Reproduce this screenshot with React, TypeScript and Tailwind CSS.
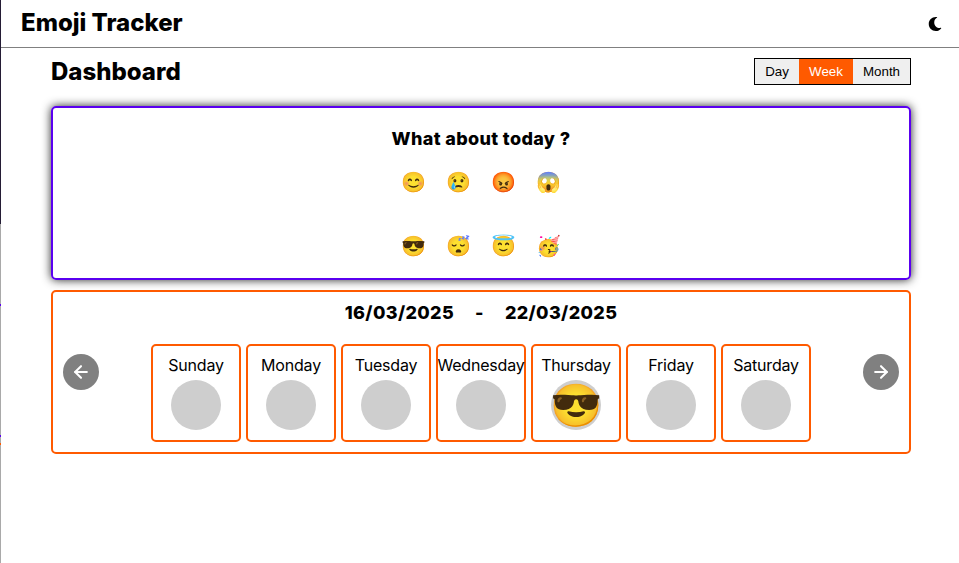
import { ArrowLeft, ArrowRight } from "lucide-react";

const days = ["Sunday", "Monday", "Tuesday", "Wednesday", "Thursday", "Friday", "Saturday"];
const emojis = ["😊", "😢", "😡", "😱", "😎", "😴", "😇", "🥳"];

function Moon() {
  return (
    <svg viewBox="0 0 512 512" className="w-[14px] h-[16px]" fill="#000">
      <path d="M283 512c79 0 151-36 199-95 7-9-1-22-12-20-126 24-242-73-242-200 0-73 39-140 103-176 10-6 8-20-3-22A257 257 0 0 0 283 0C141 0 27 115 27 256s114 256 256 256z" />
    </svg>
  );
}

export default function App() {
  return (
    <div className="flex w-[959px] h-[563px] overflow-hidden bg-white text-black font-['Inter',sans-serif]">
      <div className="w-px shrink-0 flex flex-col">
        <div className="h-[224px] bg-[#241c35]" />
        <div className="h-[80px] bg-[#a9a9a9]" />
        <div className="h-[2px] bg-[#5a00f0]" />
        <div className="h-[129px] bg-[#a9a9a9]" />
        <div className="h-[2px] bg-[#5a00f0]" />
        <div className="h-[6px] bg-[#a9a9a9]" />
        <div className="h-[2px] bg-[#ff5a00]" />
        <div className="flex-1 bg-[#a9a9a9]" />
      </div>
      <div className="flex-1 min-w-0 flex flex-col">
        <header className="h-[48px] shrink-0 border-b border-[#808080] flex items-center justify-between pl-[20px] pr-[17px]">
          <h1 className="text-[24px] leading-[32px] font-extrabold mt-[-2px]">Emoji Tracker</h1>
          <Moon />
        </header>
        <main className="pl-[50px] pr-[48px] flex flex-col">
          <div className="flex items-center justify-between h-[48px] mb-[10px]">
            <h2 className="text-[24px] leading-[32px] font-extrabold">Dashboard</h2>
            <div className="flex h-[27px] w-[157px] border border-black font-['Liberation_Sans',sans-serif] text-[13.33px] mt-[-1px]">
              <div className="w-[44px] bg-[#efefef] flex items-center justify-center">Day</div>
              <div className="w-[54px] bg-[#ff5a00] text-white flex items-center justify-center">Week</div>
              <div className="flex-1 bg-[#efefef] flex items-center justify-center">Month</div>
            </div>
          </div>
          <section className="h-[174px] border-2 border-[#5a00f0] rounded-[5px] shadow-[0_0_10px_rgba(0,0,0,0.85)] flex flex-col items-center pt-[19px]">
            <h3 className="text-[18px] leading-[24px] font-extrabold tracking-[0.02em]">What about today ?</h3>
            <div className="grid grid-cols-[repeat(4,45px)] grid-rows-[64px_64px] mt-[17px] text-[20px]">
              {emojis.map((e) => (
                <div key={e} className="flex items-center justify-center h-[30px] mt-[-1px]">{e}</div>
              ))}
            </div>
          </section>
          <section className="h-[164px] mt-[10px] border-2 border-[#ff5a00] rounded-[5px] flex flex-col">
            <div className="flex justify-center gap-[21px] pt-[7px] text-[18px] leading-[28px] font-extrabold tracking-[0.02em]">
              <span>16/03/2025</span><span>-</span><span>22/03/2025</span>
            </div>
            <div className="flex items-start justify-between mt-[17px] px-[10px]">
              <button className="mt-[10px] w-[36px] h-[36px] rounded-full bg-[#808080] text-white flex items-center justify-center">
                <ArrowLeft size={20} strokeWidth={2.5} />
              </button>
              <div className="flex gap-[5px]">
                {days.map((d) => (
                  <div key={d} className="w-[90px] h-[98px] border-2 border-[#ff5a00] rounded-[5px] flex flex-col items-center pt-[7px]">
                    <span className="text-[16px] leading-[24px] whitespace-nowrap tracking-[-0.012em]">{d}</span>
                    <div className="w-[50px] h-[50px] rounded-full bg-[#cecece] flex items-center justify-center mt-[3px] overflow-visible">
                      {d === "Thursday" ? <span className="text-[42px] leading-[48px]">😎</span> : null}
                    </div>
                  </div>
                ))}
              </div>
              <button className="mt-[10px] w-[36px] h-[36px] rounded-full bg-[#808080] text-white flex items-center justify-center">
                <ArrowRight size={20} strokeWidth={2.5} />
              </button>
            </div>
          </section>
        </main>
      </div>
    </div>
  );
}
